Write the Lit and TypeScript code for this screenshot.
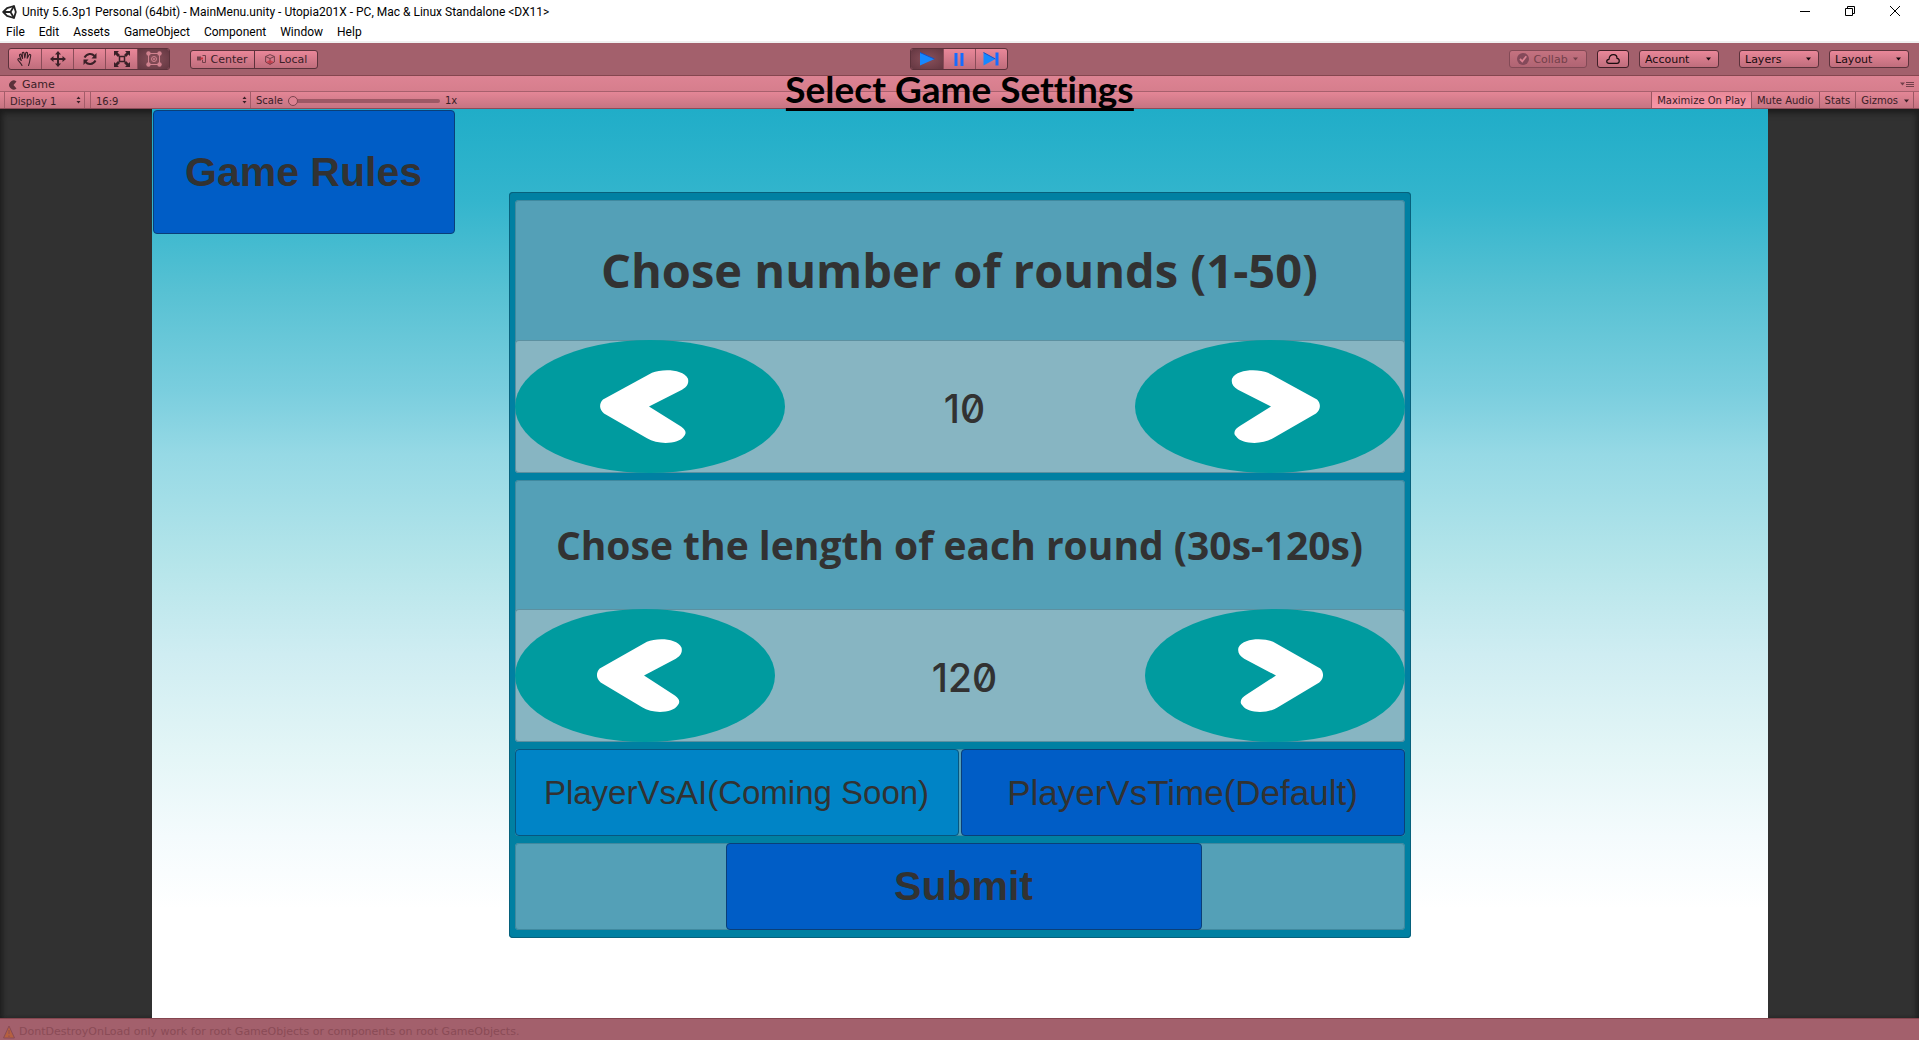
import { LitElement, html, css, svg } from "lit";
import { customElement, property, state } from "lit/decorators.js";

const arrowShape = svg`
  <ellipse cx="135" cy="67" rx="135" ry="67" fill="#009b9f"></ellipse>
  <path fill="#fff" d="M88 60 L137 33 C147 29 168 29 173 39 C174 44 172 47 167 50 L134 67 L164 86 C171 90 172 94 169 97 C164 105 143 106 132 99 L89 74 C84 70 84 64 88 60 Z"></path>`;

const caret = html`<svg class="caret" viewBox="0 0 7 4" width="7" height="4" aria-hidden="true"><path d="M1 0.5H6L3.5 3.5Z" fill="currentColor"/></svg>`;
const updown = html`<svg class="caret" viewBox="0 0 5 8" width="5" height="8" aria-hidden="true"><path d="M0.5 3H4.5L2.5 0.5ZM0.5 5H4.5L2.5 7.5Z" fill="currentColor"/></svg>`;

@customElement("value-stepper")
export class ValueStepper extends LitElement {
  @property() label = "";
  @property({ type: Number }) value = 0;
  @property({ type: Number }) min = 0;
  @property({ type: Number }) max = 100;
  @property({ type: Number }) step = 1;

  static styles = css`
    :host {
      display: grid;
      grid-template-columns: var(--stepper-columns, 270fr 350fr 270fr);
      grid-template-rows: minmax(0, 1fr);
      min-height: 0;
      background: #87b5c2;
      border-radius: 4px;
      box-shadow: inset 0 0 0 1px rgba(30, 90, 110, 0.4);
    }
    .arrow {
      border: 0;
      padding: 0;
      background: none;
      min-height: 0;
      min-width: 0;
      display: flex;
      cursor: pointer;
    }
    .arrow svg {
      width: 100%;
      height: 100%;
      display: block;
    }
    .next svg {
      transform: scaleX(-1);
    }
    .value {
      display: flex;
      align-items: center;
      justify-content: center;
      padding: 4px 0 0 10px;
      color: #323232;
      font: 500 39px/40px Inter, "DejaVu Sans", sans-serif;
      font-feature-settings: "zero" 1;
    }
  `;

  private change(delta: number) {
    this.value = Math.min(this.max, Math.max(this.min, this.value + delta));
  }

  render() {
    return html`
      <button class="arrow" aria-label="Decrease ${this.label}" @click=${() => this.change(-this.step)}>
        <svg viewBox="0 0 270 134" preserveAspectRatio="none" aria-hidden="true">${arrowShape}</svg>
      </button>
      <output class="value">${this.value}</output>
      <button class="arrow next" aria-label="Increase ${this.label}" @click=${() => this.change(this.step)}>
        <svg viewBox="0 0 270 134" preserveAspectRatio="none" aria-hidden="true">${arrowShape}</svg>
      </button>
    `;
  }
}

@customElement("app-root")
export class AppRoot extends LitElement {
  @state() private maximize = true;

  static styles = css`
    :host {
      display: flex;
      flex-direction: column;
      height: 100vh;
      overflow: hidden;
      background: #a3606c;
      color: #3a2027;
      font-family: "DejaVu Sans", Verdana, sans-serif;
    }
    * {
      box-sizing: border-box;
    }
    button,
    select {
      font: inherit;
      color: inherit;
      margin: 0;
      border: 0;
      background: none;
      padding: 0;
    }
    select {
      appearance: none;
      width: 100%;
      height: 100%;
      outline: 0;
    }
    svg {
      display: block;
      flex: none;
    }

    .titlebar {
      display: flex;
      align-items: center;
      justify-content: space-between;
      height: 22px;
      background: #fff;
      color: #000;
      font: 12px/16px Roboto, "Segoe UI", sans-serif;
    }
    .caption {
      display: flex;
      align-items: center;
      gap: 5px;
      padding: 2px 0 0 2px;
    }
    .window-buttons {
      display: flex;
      padding-right: 2px;
    }
    .window-buttons button {
      width: 45px;
      height: 20px;
      display: grid;
      place-items: center;
    }
    .menubar {
      display: flex;
      gap: 14px;
      height: 21px;
      padding: 0 6px;
      background: #fff;
      border-bottom: 2px solid #f0f0f0;
      color: #000;
      font: 12px/20px Roboto, "Segoe UI", sans-serif;
    }

    .toolbar {
      display: grid;
      grid-template-columns: 1fr auto 1fr;
      align-items: center;
      height: 33px;
      padding: 0 10px 0 8px;
      border-bottom: 1px solid #85464f;
      font-size: 11px;
    }
    .side {
      display: flex;
      align-items: center;
      gap: 20px;
    }
    .side.right {
      justify-content: flex-end;
      gap: 10px;
    }
    .group {
      display: flex;
      border: 1px solid #5c323b;
      border-radius: 3px;
      overflow: hidden;
      background: linear-gradient(#e98799, #bf6d7c);
    }
    .tool {
      width: 32px;
      height: 20px;
      display: grid;
      place-items: center;
    }
    .group > * + * {
      border-left: 1px solid #8a4d59;
    }
    .pressed {
      background: radial-gradient(#8a505b, #633741);
    }
    .mode {
      display: flex;
      align-items: center;
      justify-content: center;
      gap: 4px;
      width: 63px;
      height: 17px;
    }
    .group > .mode + .mode {
      border-left-color: #5c323b;
    }
    .drop {
      position: relative;
      display: flex;
      align-items: center;
      width: 80px;
      height: 18px;
      border: 1px solid #5c323b;
      border-radius: 3px;
      background: linear-gradient(#e98799, #bf6d7c);
      color: #170b0e;
    }
    .drop select {
      padding-left: 5px;
    }
    .drop .caret,
    .pick .caret {
      position: absolute;
      right: 6px;
      pointer-events: none;
    }
    .pick .caret {
      right: 3px;
    }
    .drop.gapped {
      margin-left: 10px;
    }
    .collab {
      justify-content: center;
      gap: 4px;
      width: 78px;
      border-color: #834a56;
      background: linear-gradient(#c47280, #b06473);
      color: #73404a;
    }
    .drop.collab .caret {
      position: static;
    }
    .cloud {
      justify-content: center;
      width: 32px;
      border-color: #401f27;
    }

    .tabrow {
      display: flex;
      align-items: center;
      justify-content: space-between;
      height: 16px;
      padding: 2px 5px 0 8px;
      background: linear-gradient(#dd8393, #d67e8d);
      border-bottom: 1px solid #a7606d;
      font-size: 11px;
      line-height: 13px;
    }
    .tab {
      display: flex;
      align-items: center;
      gap: 4px;
    }
    .gamebar {
      display: flex;
      justify-content: space-between;
      height: 17px;
      padding: 0 5px 0 4px;
      background: linear-gradient(#e48696, #c67482);
      border-bottom: 1px solid #8d4c58;
      font-size: 10px;
      line-height: 16px;
    }
    .cells {
      display: flex;
    }
    .pick {
      position: relative;
      display: flex;
      align-items: center;
      border-left: 1px solid #a35c69;
      border-right: 1px solid #a35c69;
    }
    .pick select {
      padding: 2px 0 0 5px;
    }
    .pick.display {
      width: 81px;
      margin-right: 5px;
    }
    .pick.aspect {
      width: 161px;
    }
    .scale {
      display: flex;
      align-items: center;
      gap: 5px;
      padding: 2px 0 0 5px;
    }
    .range {
      appearance: none;
      width: 152px;
      height: 12px;
      margin: 0;
      background: none;
    }
    .range::-webkit-slider-runnable-track {
      height: 4px;
      border-radius: 2px;
      background: #9d5865;
    }
    .range::-webkit-slider-thumb {
      appearance: none;
      width: 10px;
      height: 10px;
      margin-top: -3px;
      border: 1px solid #7d444f;
      border-radius: 50%;
      background: #dd8292;
    }
    .toggle {
      padding: 1px 5px 0;
      border-left: 1px solid #9b5763;
    }
    .toggle.on {
      background: linear-gradient(#e98a9a, #f795a6);
    }
    .gizmos {
      display: flex;
      align-items: center;
      gap: 5px;
      border-right: 1px solid #9b5763;
    }
    .gizmos .caret {
      margin-right: -2px;
    }

    .stage {
      position: relative;
      flex: 1;
      min-height: 0;
      display: flex;
      justify-content: center;
      background: #313131;
      box-shadow: inset 0 4px 6px #1c1c1c, inset 4px 0 4px -2px #222, inset -4px 0 4px -2px #222;
    }
    .heading {
      position: absolute;
      top: -40px;
      left: 50%;
      transform: translateX(-50%);
      margin: 0;
      color: #000;
      font: bold 37px/39px Lato, Calibri, sans-serif;
      font-variant-ligatures: none;
      white-space: nowrap;
      border-bottom: 3px solid #000;
    }
    .view {
      height: 100%;
      aspect-ratio: 16 / 9;
      display: grid;
      grid-template-columns: minmax(0, 357fr) minmax(0, 902fr) minmax(0, 357fr);
      grid-template-rows: minmax(0, 83fr) minmax(0, 746fr) minmax(0, 80fr);
      background: linear-gradient(
        #20adc8,
        #33b5cd 10%,
        #57c1d3 20%,
        #7acede 31%,
        #96d9e5 38%,
        #b5e5ea 50%,
        #cfedf2 60%,
        #e2f5f6 70%,
        #f4fbfd 80%,
        #fff 88%
      );
    }
    .action {
      border: 1px solid #0a3f78;
      border-radius: 4px;
      background: #005dc6;
      color: #323232;
      font-family: "Liberation Sans", Arial, sans-serif;
      font-size: 35px;
      cursor: pointer;
    }
    .strong {
      font-weight: bold;
      font-size: 41px;
    }
    .rules {
      grid-area: 1 / 1;
      align-self: start;
      width: 302px;
      height: 124px;
      margin: 1px;
    }
    .panel {
      grid-area: 2 / 2;
      display: grid;
      grid-template-rows: minmax(0, 273fr) minmax(0, 262fr) minmax(0, 87fr) minmax(0, 87fr);
      gap: 7px;
      min-height: 0;
      padding: 8px 6px;
      border-radius: 4px;
      background: #0080a2;
      box-shadow: inset 0 0 0 1px #07617c;
    }
    .card {
      display: grid;
      min-height: 0;
      border-radius: 4px;
      background: #54a0b7;
      box-shadow: inset 0 0 0 1px #40899f;
    }
    .setting.rounds {
      grid-template-rows: minmax(0, 140fr) minmax(0, 133fr);
    }
    .setting.seconds {
      grid-template-rows: minmax(0, 129fr) minmax(0, 133fr);
      --stepper-columns: 260fr 370fr 260fr;
    }
    .label {
      display: flex;
      align-items: center;
      justify-content: center;
      margin: 0;
      color: #323232;
      font: bold 47px/56px "Open Sans", sans-serif;
      white-space: nowrap;
    }
    .seconds .label {
      font-size: 39px;
    }
    .modes {
      grid-template-columns: 1fr 1fr;
      gap: 2px;
    }
    .ai {
      background: #0084c6;
      border-color: #07567f;
      font-size: 33px;
    }
    .send {
      grid-template-columns: 211fr 476fr 203fr;
    }
    .submit {
      grid-column: 2;
    }
    .status {
      display: flex;
      align-items: center;
      gap: 4px;
      height: 22px;
      padding: 4px 3px 0;
      border-top: 1px solid #85464f;
      color: #8a4b56;
      font-size: 11px;
      line-height: 14px;
    }
  `;

  private renderTools() {
    return html`
      <div class="group">
        <button class="tool" aria-label="Hand">
          <svg width="16" height="16" viewBox="0 0 16 16" fill="none" stroke="currentColor" stroke-width="1.1" stroke-linejoin="round" stroke-linecap="round">
            <path d="M5 14.5C4 12 2 10.500 1 9C0.500 7.500 2 7.200 3 8.200L4.300 9.500L2.500 4.500C2.200 3 3.700 2.700 4.200 4L5.600 7.500L5.200 2.500C5.200 1 6.900 1 7.100 2.300L7.800 7L8.700 2.200C9 0.900 10.600 1.200 10.500 2.600L10.200 7.300L12 4C12.600 2.900 14 3.500 13.700 4.700L12.800 9.500C12.500 12 12 13 11.500 14.500"/>
          </svg>
        </button>
        <button class="tool" aria-label="Move">
          <svg width="16" height="16" viewBox="0 0 16 16" fill="currentColor"><path d="M8 0L11 3.500H9V7H12.500V5L16 8L12.500 11V9H9V12.500H11L8 16L5 12.500H7V9H3.500V11L0 8L3.500 5V7H7V3.500H5Z"/></svg>
        </button>
        <button class="tool" aria-label="Rotate">
          <svg width="16" height="14" viewBox="0 0 16 14" fill="none" stroke="currentColor" stroke-width="2"><path d="M2.500 5.500C5 1 10 1 12.500 4M13.500 8.500C11 13 6 13 3.500 10"/><path d="M14.500 1V6.500H9.500ZM1.500 13V7.500H6.500Z" fill="currentColor" stroke="none"/></svg>
        </button>
        <button class="tool" aria-label="Scale">
          <svg width="16" height="16" viewBox="0 0 16 16"><path d="M0 0H5L3.500 1.500L6 4L4 6L1.500 3.500L0 5ZM16 0V5L14.500 3.500L12 6L10 4L12.500 1.500L11 0ZM0 16V11L1.500 12.500L4 10L6 12L3.500 14.500L5 16ZM16 16H11L12.500 14.500L10 12L12 10L14.500 12.500L16 11Z" fill="currentColor"/><rect x="5.500" y="5.500" width="5" height="5" fill="#d87d8d" stroke="currentColor" stroke-width="1.500"/></svg>
        </button>
        <button class="tool pressed" aria-label="Rect" aria-pressed="true">
          <svg width="18" height="18" viewBox="0 0 18 18" fill="none" stroke="#d0818e"><rect x="3.500" y="3.500" width="11" height="11"/><circle cx="9" cy="9" r="2.500"/><g fill="#d0818e" stroke="none"><circle cx="9" cy="9" r="1"/><circle cx="3.500" cy="3.500" r="2.200"/><circle cx="14.500" cy="3.500" r="2.200"/><circle cx="3.500" cy="14.500" r="2.200"/><circle cx="14.500" cy="14.500" r="2.200"/></g></svg>
        </button>
      </div>
      <div class="group">
        <button class="mode">
          <svg width="9" height="8" viewBox="0 0 9 8"><path d="M0 1.500H4V5.500H0Z" fill="#73404a"/><path d="M5.500 0.500H8.500V7.500H5.500V5" fill="none" stroke="#73404a"/><path d="M3.500 2.500H6V4.500H3.500Z" fill="#c8323f"/></svg>Center
        </button>
        <button class="mode">
          <svg width="10" height="11" viewBox="0 0 10 11" fill="none" stroke="#73404a"><path d="M5 0.600L9.400 2.500V8L5 10.400L0.600 8V2.500ZM0.600 2.500L5 4.500L9.400 2.500M5 4.500V10.400"/><path d="M1 8L5 6L9 8L5 10Z" fill="#c8323f" stroke="none" opacity=".7"/></svg>Local
        </button>
      </div>
    `;
  }

  private renderPlay() {
    return html`
      <div class="group">
        <button class="tool pressed" aria-label="Play" aria-pressed="true">
          <svg width="16" height="14" viewBox="0 0 16 14"><path d="M1 0.500L15.500 7L1 13.500Z" fill="#1688ff"/><path d="M1 0.500L15.500 7" stroke="#1450c8"/></svg>
        </button>
        <button class="tool" aria-label="Pause">
          <svg width="10" height="13" viewBox="0 0 10 13" fill="#146cff"><path d="M0.500 0H3.500V13H0.500ZM6.500 0H9.500V13H6.500Z"/></svg>
        </button>
        <button class="tool" aria-label="Step">
          <svg width="16" height="14" viewBox="0 0 16 14"><path d="M0.500 0.500L12.500 7L0.500 13.500Z" fill="#1688ff"/><path d="M0.500 0.500L12.500 7" stroke="#1450c8"/><path d="M12.500 0.500H15.500V13.500H12.500Z" fill="#146cff"/></svg>
        </button>
      </div>
    `;
  }

  render() {
    return html`
      <header class="titlebar">
        <div class="caption">
          <svg width="15" height="14" viewBox="0 0 15 14" fill="none" stroke="#222" stroke-width="1.800" stroke-linejoin="round"><path d="M1.200 7L5 3.200L12 1L13.800 7L12 13L5 10.800Z"/><path d="M1.200 7H8.500L12 1M8.500 7L12 13"/></svg>
          <span>Unity 5.6.3p1 Personal (64bit) - MainMenu.unity - Utopia201X - PC, Mac &amp; Linux Standalone &lt;DX11&gt;</span>
        </div>
        <div class="window-buttons">
          <button aria-label="Minimize"><svg width="10" height="10" viewBox="0 0 10 10" stroke="#000"><path d="M0 5.500H10"/></svg></button>
          <button aria-label="Restore"><svg width="10" height="10" viewBox="0 0 10 10" stroke="#000" fill="none"><path d="M0.500 2.500H7.500V9.500H0.500ZM2.500 2.500V0.500H9.500V7.500H7.500"/></svg></button>
          <button aria-label="Close"><svg width="10" height="10" viewBox="0 0 10 10" stroke="#000"><path d="M0 0L10 10M10 0L0 10"/></svg></button>
        </div>
      </header>
      <nav class="menubar">
        ${["File", "Edit", "Assets", "GameObject", "Component", "Window", "Help"].map((m) => html`<button>${m}</button>`)}
      </nav>
      <div class="toolbar">
        <div class="side">${this.renderTools()}</div>
        ${this.renderPlay()}
        <div class="side right">
          <button class="drop collab">
            <svg width="12" height="12" viewBox="0 0 12 12"><circle cx="6" cy="6" r="6" fill="#84495a"/><path d="M3 6L5.300 8.300L9.300 3.300" fill="none" stroke="#dc8292" stroke-width="1.800"/></svg>
            Collab ${caret}
          </button>
          <button class="drop cloud" aria-label="Services">
            <svg width="14" height="10" viewBox="0 0 14 10" fill="none" stroke="#170b0e" stroke-width="1.200"><path d="M3 9.300C0 9.300 0 5.500 3 5.300C3.300 2 5.500 0.700 7.500 0.700C9.800 0.700 11 2.500 11 4.300C14 4.500 14 9.300 11 9.300Z"/></svg>
          </button>
          <div class="drop"><select aria-label="Account"><option>Account</option></select>${caret}</div>
          <div class="drop gapped"><select aria-label="Layers"><option>Layers</option></select>${caret}</div>
          <div class="drop"><select aria-label="Layout"><option>Layout</option></select>${caret}</div>
        </div>
      </div>
      <div class="tabrow">
        <div class="tab">
          <svg width="10" height="10" viewBox="0 0 10 10"><path d="M8.500 1.500A4.500 4.500 0 1 0 8.500 8.500L5.500 5Z" fill="#5c323b"/></svg>
          <span>Game</span>
        </div>
        <svg width="14" height="7" viewBox="0 0 14 7"><path d="M0 1.500H5L2.500 4.500Z" fill="#73404a"/><path d="M6 1.500H14M6 3.500H14M6 5.500H14" stroke="#73404a"/></svg>
      </div>
      <div class="gamebar">
        <div class="cells">
          <div class="pick display"><select aria-label="Display"><option>Display 1</option></select>${updown}</div>
          <div class="pick aspect"><select aria-label="Aspect"><option>16:9</option></select>${updown}</div>
          <div class="scale">
            <label for="scale">Scale</label>
            <input class="range" id="scale" type="range" min="1" max="5" value="1" />
            <span>1x</span>
          </div>
        </div>
        <div class="cells">
          <button class="toggle ${this.maximize ? "on" : ""}" @click=${() => (this.maximize = !this.maximize)}>Maximize On Play</button>
          <button class="toggle">Mute Audio</button>
          <button class="toggle">Stats</button>
          <button class="toggle gizmos">Gizmos ${caret}</button>
        </div>
      </div>
      <main class="stage">
        <div class="view">
          <button class="action strong rules">Game Rules</button>
          <section class="panel">
            <div class="card setting rounds">
              <h2 class="label">Chose number of rounds (1-50)</h2>
              <value-stepper label="rounds" .value=${10} .min=${1} .max=${50}></value-stepper>
            </div>
            <div class="card setting seconds">
              <h2 class="label">Chose the length of each round (30s-120s)</h2>
              <value-stepper label="round length" .value=${120} .min=${30} .max=${120} .step=${10}></value-stepper>
            </div>
            <div class="card modes">
              <button class="action ai">PlayerVsAI(Coming Soon)</button>
              <button class="action">PlayerVsTime(Default)</button>
            </div>
            <div class="card send">
              <button class="action strong submit">Submit</button>
            </div>
          </section>
        </div>
        <h1 class="heading">Select Game Settings</h1>
      </main>
      <footer class="status">
        <svg width="12" height="14" viewBox="0 0 12 14"><path d="M6 1L11.500 13H0.500Z" fill="#b5603f" stroke="#8a4b56"/><path d="M6 5V9M6 10.500V12" stroke="#8a4b56"/></svg>
        <span>DontDestroyOnLoad only work for root GameObjects or components on root GameObjects.</span>
      </footer>
    `;
  }
}
